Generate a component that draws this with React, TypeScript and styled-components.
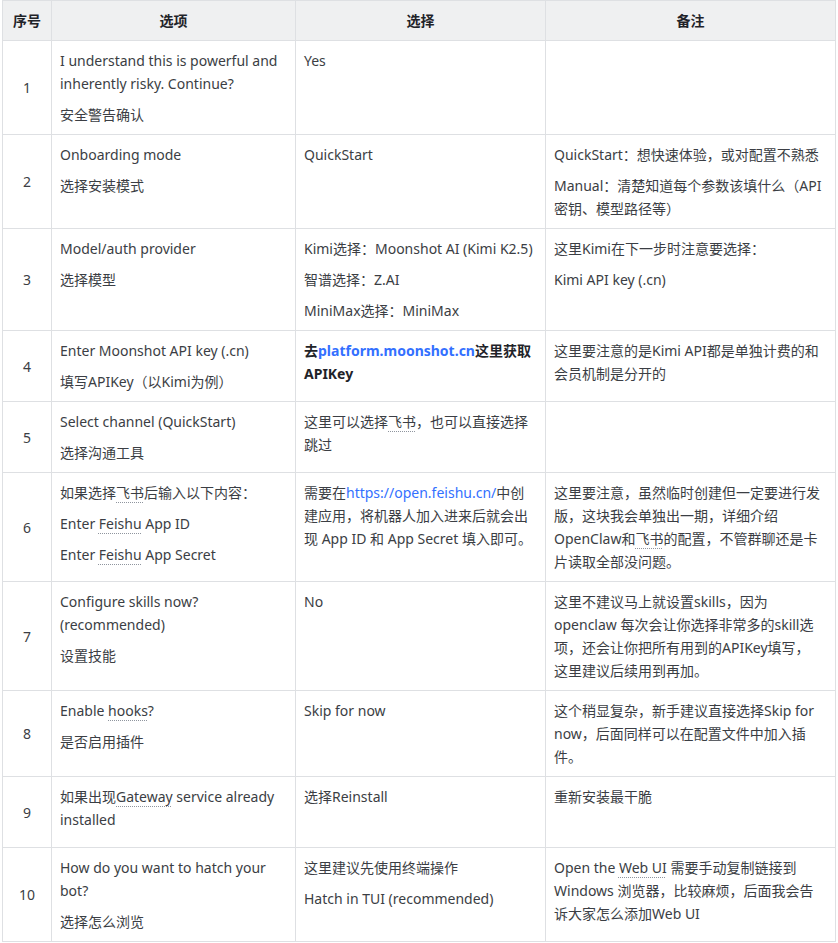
import styled, { createGlobalStyle } from 'styled-components';

const GlobalStyle = createGlobalStyle`
  body {
    margin: 0;
    background: #fff;
    font-family: 'Noto Sans', 'Noto Sans CJK SC', sans-serif;
  }
`;

type Cell = React.ReactNode[];

interface Step {
  no: number;
  option: Cell;
  choice: Cell;
  note: Cell;
}

const Term = styled.span`
  text-decoration: underline dotted #8f959e;
  text-underline-offset: 4px;
  text-decoration-thickness: 1px;
`;

const Link = styled.a`
  color: #3370ff;
  text-decoration: none;
`;

const steps: Step[] = [
  {
    no: 1,
    option: ['I understand this is powerful and inherently risky. Continue?', '安全警告确认'],
    choice: ['Yes'],
    note: [],
  },
  {
    no: 2,
    option: ['Onboarding mode', '选择安装模式'],
    choice: ['QuickStart'],
    note: ['QuickStart：想快速体验，或对配置不熟悉', 'Manual：清楚知道每个参数该填什么（API密钥、模型路径等）'],
  },
  {
    no: 3,
    option: ['Model/auth provider', '选择模型'],
    choice: ['Kimi选择：Moonshot AI (Kimi K2.5)', '智谱选择：Z.AI', 'MiniMax选择：MiniMax'],
    note: ['这里Kimi在下一步时注意要选择：', 'Kimi API key (.cn)'],
  },
  {
    no: 4,
    option: ['Enter Moonshot API key (.cn)', '填写APIKey（以Kimi为例）'],
    choice: [
      <b key="b">
        去<Link href="#">platform.moonshot.cn</Link>这里获取APIKey
      </b>,
    ],
    note: ['这里要注意的是Kimi API都是单独计费的和会员机制是分开的'],
  },
  {
    no: 5,
    option: ['Select channel (QuickStart)', '选择沟通工具'],
    choice: [
      <>
        这里可以选择<Term>飞书</Term>，也可以直接选择跳过
      </>,
    ],
    note: [],
  },
  {
    no: 6,
    option: [
      <>
        如果选择<Term>飞书</Term>后输入以下内容：
      </>,
      <>
        Enter <Term>Feishu</Term> App ID
      </>,
      <>
        Enter <Term>Feishu</Term> App Secret
      </>,
    ],
    choice: [
      <>
        需要在<Link href="#">https://open.feishu.cn/</Link>中创建应用，将机器人加入进来后就会出现 App ID 和 App Secret
        填入即可。
      </>,
    ],
    note: [
      <>
        这里要注意，虽然临时创建但一定要进行发版，这块我会单独出一期，详细介绍OpenClaw和<Term>飞书</Term>
        的配置，不管群聊还是卡片读取全部没问题。
      </>,
    ],
  },
  {
    no: 7,
    option: ['Configure skills now? (recommended)', '设置技能'],
    choice: ['No'],
    note: [
      <>
        这里不建议马上就设置skills，因为openclaw 每次会让你选择非常多的skill选项，还会让你把所有用到的APIKey填写，
        <br />
        这里建议后续用到再加。
      </>,
    ],
  },
  {
    no: 8,
    option: [
      <>
        Enable <Term>hooks</Term>?
      </>,
      '是否启用插件',
    ],
    choice: ['Skip for now'],
    note: ['这个稍显复杂，新手建议直接选择Skip for now，后面同样可以在配置文件中加入插件。'],
  },
  {
    no: 9,
    option: [
      <>
        如果出现<Term>Gateway</Term> service already installed
      </>,
    ],
    choice: ['选择Reinstall', ''],
    note: ['重新安装最干脆'],
  },
  {
    no: 10,
    option: ['How do you want to hatch your bot?', '选择怎么浏览'],
    choice: ['这里建议先使用终端操作', 'Hatch in TUI (recommended)'],
    note: [
      <>
        Open the <Term>Web UI</Term> 需要手动复制链接到Windows 浏览器，比较麻烦，后面我会告诉大家怎么添加Web UI
      </>,
    ],
  },
];

const App: React.FC = () => {
  return (
    <>
      <GlobalStyle />
      <Table>
        <colgroup>
          <col style={{ width: 49 }} />
          <col style={{ width: 244 }} />
          <col style={{ width: 250 }} />
          <col />
        </colgroup>
        <thead>
          <tr>
            <Head>序号</Head>
            <Head>选项</Head>
            <Head>选择</Head>
            <Head>备注</Head>
          </tr>
        </thead>
        <tbody>
          {steps.map((step) => (
            <tr key={step.no}>
              <NoCell>{step.no}</NoCell>
              {[step.option, step.choice, step.note].map((cell, i) => (
                <TextCell key={i}>
                  {cell.map((p, j) => (
                    <Para key={j}>{p === '' ? '\u00a0' : p}</Para>
                  ))}
                </TextCell>
              ))}
            </tr>
          ))}
        </tbody>
      </Table>
    </>
  );
};

const Table = styled.table`
  width: 834px;
  margin: 0 2px;
  border-collapse: collapse;
  table-layout: fixed;
  font-size: 14px;
  line-height: 23px;
  color: #3b3e44;
  td,
  th {
    border: 1px solid #dee0e3;
  }
`;

const Head = styled.th`
  padding: 8px;
  background: #eff0f1;
  color: #1f2329;
  font-weight: 700;
  text-align: center;
`;

const NoCell = styled.td`
  padding: 8px;
  text-align: center;
  vertical-align: middle;
`;

const TextCell = styled.td`
  padding: 8px 8px 0;
  vertical-align: top;
  word-break: break-word;
  b {
    color: #1f2329;
  }
`;

const Para = styled.p`
  margin: 0 0 8px;
`;

export default App;
